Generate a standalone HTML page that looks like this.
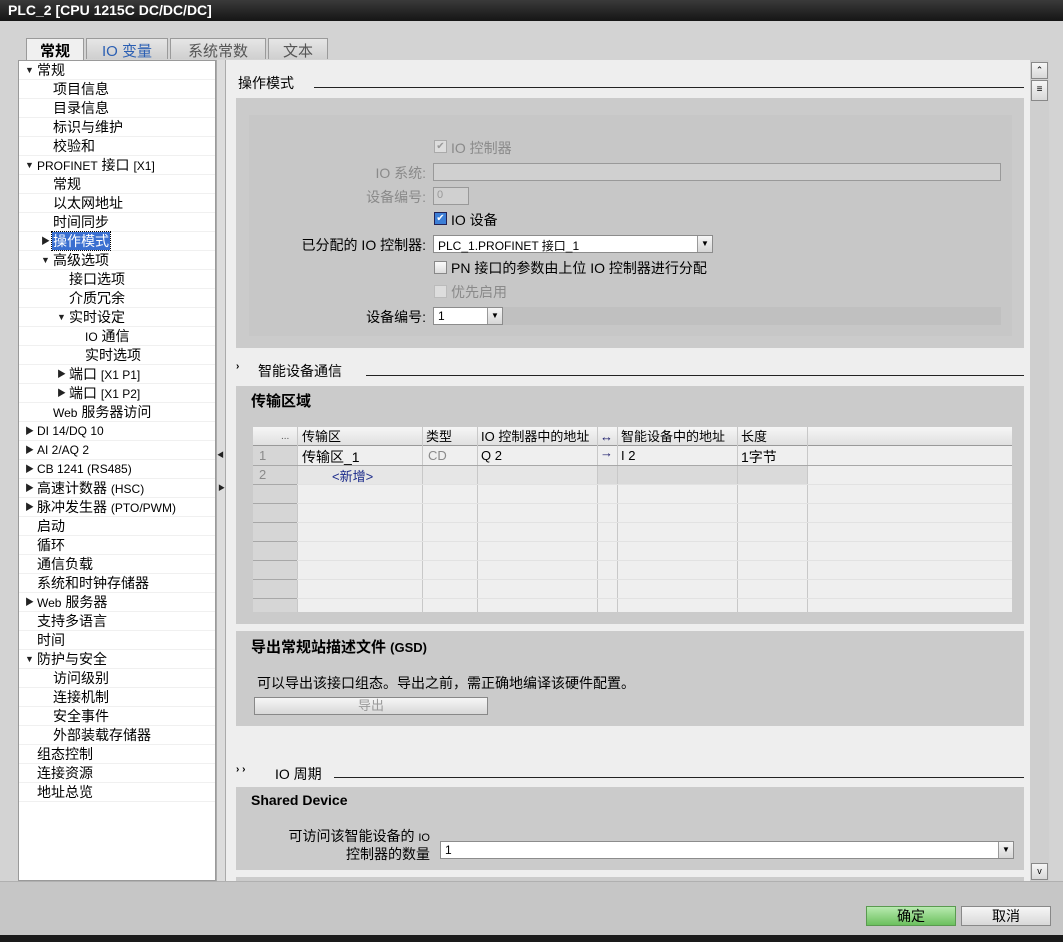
<!DOCTYPE html>
<html><head><meta charset="utf-8"><style>
*{margin:0;padding:0;box-sizing:border-box}
body{width:1063px;height:942px;overflow:hidden;background:#d3d3d3;font-family:"Liberation Sans","Noto Sans CJK SC",sans-serif;font-size:14px;color:#000;position:relative}
.a{position:absolute;white-space:nowrap}
.title{left:0;top:0;width:1063px;height:21px;background:linear-gradient(#3a3a3a,#151515);color:#fff;font-weight:bold;font-size:14px;padding:2px 0 0 8px}
.tab{top:38px;height:21px;border:1px solid #9a9a9a;border-bottom:none;background:linear-gradient(#e6e6e6,#cfcfcf);font-size:15px;text-align:center;padding-top:1px;color:#555}
.tree{left:18px;top:60px;width:198px;height:821px;background:#fff;border:1px solid #9a9a9a}
.tr{position:absolute;left:0;width:196px;height:19px;border-bottom:1px solid #f0f0f0;font-size:14px;line-height:18px}
.tr span{position:absolute}
.arr{font-size:9px;color:#222}
.sm{font-size:12px}
.content{left:226px;top:60px;width:804px;height:821px;background:#eeeeee}
.panel{background:#cbcbcb}
.hline{height:1px;background:#222}
.lbl{font-size:14px;text-align:right}
.gray{color:#8a8a8a}
.box{border:1px solid #8c8c8c;background:#fff;height:18px;font-size:12px;padding:1px 4px}
.dd{position:absolute;right:0;top:0;width:15px;height:16px;border-left:1px solid #999;background:linear-gradient(#f6f6f6,#d6d6d6);font-size:8px;text-align:center;line-height:16px}
.cb{width:13px;height:13px;border:1px solid #888;background:linear-gradient(#fafafa,#ddd)}
.btn{border:1px solid #888;background:linear-gradient(#f6f6f6,#d8d8d8);text-align:center;font-size:14px}
.th{font-size:13px;top:428px;line-height:18px}
</style></head><body>
<div class="a title">PLC_2 [CPU 1215C DC/DC/DC]</div>

<div class="a tab" style="left:26px;width:58px;background:#f0f0f0;color:#000;font-weight:bold;height:22px">常规</div>
<div class="a tab" style="left:86px;width:82px;color:#2b5fb3">IO 变量</div>
<div class="a tab" style="left:170px;width:96px">系统常数</div>
<div class="a tab" style="left:268px;width:60px">文本</div>

<div class="a tree">
<div class="tr" style="top:0"><span class="arr" style="left:6px">▼</span><span style="left:18px">常规</span></div>
<div class="tr" style="top:19px"><span style="left:34px">项目信息</span></div>
<div class="tr" style="top:38px"><span style="left:34px">目录信息</span></div>
<div class="tr" style="top:57px"><span style="left:34px">标识与维护</span></div>
<div class="tr" style="top:76px"><span style="left:34px">校验和</span></div>
<div class="tr" style="top:95px"><span class="arr" style="left:6px">▼</span><span style="left:18px"><span class="sm" style="position:static">PROFINET</span> 接口 <span class="sm" style="position:static">[X1]</span></span></div>
<div class="tr" style="top:114px"><span style="left:34px">常规</span></div>
<div class="tr" style="top:133px"><span style="left:34px">以太网地址</span></div>
<div class="tr" style="top:152px"><span style="left:34px">时间同步</span></div>
<div class="tr" style="top:171px"><span class="arr" style="left:22px">▶</span><span style="left:33px;background:#3a6fd0;color:#fff;padding:0 1px;outline:1px dotted #000">操作模式</span></div>
<div class="tr" style="top:190px"><span class="arr" style="left:22px">▼</span><span style="left:34px">高级选项</span></div>
<div class="tr" style="top:209px"><span style="left:50px">接口选项</span></div>
<div class="tr" style="top:228px"><span style="left:50px">介质冗余</span></div>
<div class="tr" style="top:247px"><span class="arr" style="left:38px">▼</span><span style="left:50px">实时设定</span></div>
<div class="tr" style="top:266px"><span style="left:66px"><span class="sm" style="position:static">IO</span> 通信</span></div>
<div class="tr" style="top:285px"><span style="left:66px">实时选项</span></div>
<div class="tr" style="top:304px"><span class="arr" style="left:38px">▶</span><span style="left:50px">端口 <span class="sm" style="position:static">[X1 P1]</span></span></div>
<div class="tr" style="top:323px"><span class="arr" style="left:38px">▶</span><span style="left:50px">端口 <span class="sm" style="position:static">[X1 P2]</span></span></div>
<div class="tr" style="top:342px"><span style="left:34px"><span class="sm" style="position:static">Web</span> 服务器访问</span></div>
<div class="tr sm" style="top:361px"><span class="arr" style="left:6px">▶</span><span style="left:18px">DI 14/DQ 10</span></div>
<div class="tr sm" style="top:380px"><span class="arr" style="left:6px">▶</span><span style="left:18px">AI 2/AQ 2</span></div>
<div class="tr sm" style="top:399px"><span class="arr" style="left:6px">▶</span><span style="left:18px">CB 1241 (RS485)</span></div>
<div class="tr" style="top:418px"><span class="arr" style="left:6px">▶</span><span style="left:18px">高速计数器 <span class="sm" style="position:static">(HSC)</span></span></div>
<div class="tr" style="top:437px"><span class="arr" style="left:6px">▶</span><span style="left:18px">脉冲发生器 <span class="sm" style="position:static">(PTO/PWM)</span></span></div>
<div class="tr" style="top:456px"><span style="left:18px">启动</span></div>
<div class="tr" style="top:475px"><span style="left:18px">循环</span></div>
<div class="tr" style="top:494px"><span style="left:18px">通信负载</span></div>
<div class="tr" style="top:513px"><span style="left:18px">系统和时钟存储器</span></div>
<div class="tr" style="top:532px"><span class="arr" style="left:6px">▶</span><span style="left:18px"><span class="sm" style="position:static">Web</span> 服务器</span></div>
<div class="tr" style="top:551px"><span style="left:18px">支持多语言</span></div>
<div class="tr" style="top:570px"><span style="left:18px">时间</span></div>
<div class="tr" style="top:589px"><span class="arr" style="left:6px">▼</span><span style="left:18px">防护与安全</span></div>
<div class="tr" style="top:608px"><span style="left:34px">访问级别</span></div>
<div class="tr" style="top:627px"><span style="left:34px">连接机制</span></div>
<div class="tr" style="top:646px"><span style="left:34px">安全事件</span></div>
<div class="tr" style="top:665px"><span style="left:34px">外部装载存储器</span></div>
<div class="tr" style="top:684px"><span style="left:18px">组态控制</span></div>
<div class="tr" style="top:703px"><span style="left:18px">连接资源</span></div>
<div class="tr" style="top:722px"><span style="left:18px">地址总览</span></div>
</div>
<div class="a" style="left:216px;top:60px;width:10px;height:821px;background:#dcdcdc;border-left:1px solid #aaa;border-right:1px solid #aaa"></div>
<div class="a arr" style="left:217px;top:450px;font-size:7px">◀</div>
<div class="a arr" style="left:218px;top:483px;font-size:7px">▶</div>

<div class="a content"></div>
<div class="a" style="left:238px;top:73px;font-size:14px">操作模式</div>
<div class="a hline" style="left:314px;top:87px;width:710px"></div>
<div class="a panel" style="left:236px;top:98px;width:788px;height:250px"></div>
<div class="a" style="left:249px;top:115px;width:763px;height:221px;background:#c7c7c7"></div>
<div class="a cb" style="left:434px;top:140px;background:#ddd;border-color:#aaa;color:#999;font-size:10px;line-height:11px;text-align:center">✔</div><div class="a gray" style="left:451px;top:138px">IO 控制器</div>
<div class="a lbl gray" style="left:300px;width:126px;top:163px">IO 系统:</div>
<div class="a" style="left:433px;top:163px;width:568px;height:18px;border:1px solid #999;background:#d0d0d0"></div>
<div class="a lbl gray" style="left:300px;width:126px;top:187px">设备编号:</div>
<div class="a" style="left:433px;top:187px;width:36px;height:18px;border:1px solid #999;background:#d0d0d0;font-size:11px;color:#999;padding:1px 3px">0</div>
<div class="a cb" style="left:434px;top:212px;background:#3c7ed6;border-color:#225;color:#fff;font-size:10px;line-height:11px;text-align:center">✔</div><div class="a" style="left:451px;top:210px">IO 设备</div>
<div class="a lbl" style="left:250px;width:176px;top:235px">已分配的 IO 控制器:</div>
<div class="a box" style="left:433px;top:235px;width:280px">PLC_1.PROFINET 接口_1<div class="dd">▼</div></div>
<div class="a cb" style="left:434px;top:261px"></div><div class="a" style="left:451px;top:258px">PN 接口的参数由上位 IO 控制器进行分配</div>
<div class="a cb" style="left:434px;top:285px;background:#ddd;border-color:#bbb"></div><div class="a gray" style="left:451px;top:282px">优先启用</div>
<div class="a" style="left:433px;top:307px;width:568px;height:18px;background:#c0c0c0"></div>
<div class="a lbl" style="left:300px;width:126px;top:307px">设备编号:</div>
<div class="a box" style="left:433px;top:307px;width:70px">1<div class="dd">▼</div></div>

<div class="a" style="left:236px;top:361px;font-size:10px;font-weight:bold">›</div>
<div class="a" style="left:258px;top:361px">智能设备通信</div>
<div class="a hline" style="left:366px;top:375px;width:658px"></div>
<div class="a panel" style="left:236px;top:386px;width:788px;height:238px"></div>
<div class="a" style="left:251px;top:390px;font-weight:bold;font-size:15px">传输区域</div>
<div class="a" style="left:253px;top:427px;width:759px;height:185px;background:#efefef;border-top:1px solid #999"></div>
<div class="a" style="left:253px;top:427px;width:44px;height:185px;background:#d6d6d6"></div>
<div class="a" style="left:253px;top:427px;width:759px;height:19px;background:linear-gradient(#f6f6f6,#e0e0e0);border-bottom:1px solid #999"></div>
<div class="a" style="left:298px;top:466px;width:300px;height:18px;background:#e6e6e6"></div>
<div class="a" style="left:598px;top:466px;width:209px;height:18px;background:#dadada"></div>
<svg class="a" style="left:253px;top:427px" width="759" height="185">
<g stroke="#c8c8c8"><line x1="44.5" y1="0" x2="44.5" y2="185"/><line x1="169.5" y1="0" x2="169.5" y2="185"/><line x1="224.5" y1="0" x2="224.5" y2="185"/><line x1="344.5" y1="0" x2="344.5" y2="185"/><line x1="364.5" y1="0" x2="364.5" y2="185"/><line x1="484.5" y1="0" x2="484.5" y2="185"/><line x1="554.5" y1="0" x2="554.5" y2="185"/></g>
<g stroke="#a8a8a8"><line x1="0" y1="38.5" x2="759" y2="38.5"/><line x1="0" y1="57.5" x2="44" y2="57.5"/><line x1="0" y1="76.5" x2="44" y2="76.5"/><line x1="0" y1="95.5" x2="44" y2="95.5"/><line x1="0" y1="114.5" x2="44" y2="114.5"/><line x1="0" y1="133.5" x2="44" y2="133.5"/><line x1="0" y1="152.5" x2="44" y2="152.5"/><line x1="0" y1="171.5" x2="44" y2="171.5"/></g>
<g stroke="#e2e2e2"><line x1="44" y1="57.5" x2="759" y2="57.5"/><line x1="44" y1="76.5" x2="759" y2="76.5"/><line x1="44" y1="95.5" x2="759" y2="95.5"/><line x1="44" y1="114.5" x2="759" y2="114.5"/><line x1="44" y1="133.5" x2="759" y2="133.5"/><line x1="44" y1="152.5" x2="759" y2="152.5"/><line x1="44" y1="171.5" x2="759" y2="171.5"/></g>
</svg>
<div class="a th" style="left:281px;font-size:10px;color:#555">...</div>
<div class="a th" style="left:302px">传输区</div>
<div class="a th" style="left:426px">类型</div>
<div class="a th" style="left:481px">IO 控制器中的地址</div>
<div class="a th" style="left:600px;color:#1a1a6a;font-weight:bold">↔</div>
<div class="a th" style="left:621px">智能设备中的地址</div>
<div class="a th" style="left:741px">长度</div>
<div class="a gray" style="left:259px;top:448px;font-size:13px">1</div>
<div class="a" style="left:302px;top:447px">传输区_1</div>
<div class="a gray" style="left:428px;top:448px;font-size:13px">CD</div>
<div class="a" style="left:481px;top:448px;font-size:13px">Q 2</div>
<div class="a" style="left:600px;top:445px;font-size:13px;color:#1a1a6a;font-weight:bold">→</div>
<div class="a" style="left:621px;top:448px;font-size:13px">I 2</div>
<div class="a" style="left:741px;top:447px">1字节</div>
<div class="a gray" style="left:259px;top:467px;font-size:13px">2</div>
<div class="a" style="left:332px;top:466px;color:#1a2a8a;font-size:13px">&lt;新增&gt;</div>

<div class="a panel" style="left:236px;top:631px;width:788px;height:95px"></div>
<div class="a" style="left:251px;top:636px;font-weight:bold;font-size:15px">导出常规站描述文件 <span style="font-size:13px">(GSD)</span></div>
<div class="a" style="left:257px;top:673px">可以导出该接口组态。导出之前，需正确地编译该硬件配置。</div>
<div class="a btn" style="left:254px;top:697px;width:234px;height:18px;color:#999;font-size:13px;line-height:16px">导出</div>

<div class="a" style="left:236px;top:764px;font-size:10px;font-weight:bold">› ›</div>
<div class="a" style="left:275px;top:764px">IO 周期</div>
<div class="a hline" style="left:334px;top:777px;width:690px"></div>
<div class="a panel" style="left:236px;top:787px;width:788px;height:83px"></div>
<div class="a" style="left:251px;top:792px;font-weight:bold;font-size:14px">Shared Device</div>
<div class="a lbl" style="left:260px;width:170px;top:828px;line-height:16px">可访问该智能设备的 <span style="font-size:11px">IO</span><br>控制器的数量</div>
<div class="a box" style="left:440px;top:841px;width:574px">1<div class="dd">▼</div></div>
<div class="a panel" style="left:236px;top:877px;width:788px;height:4px"></div>

<div class="a" style="left:1030px;top:60px;width:19px;height:821px;background:#cfcfcf"></div>
<div class="a btn" style="left:1031px;top:62px;width:17px;height:17px;font-size:9px;line-height:15px">⌃</div>
<div class="a btn" style="left:1031px;top:80px;width:17px;height:21px;font-size:10px;line-height:18px">≡</div>
<div class="a btn" style="left:1031px;top:863px;width:17px;height:17px;font-size:9px;line-height:15px">v</div>

<div class="a" style="left:0;top:881px;width:1063px;height:54px;background:#c6c6c6;border-top:1px solid #b0b0b0"></div>
<div class="a btn" style="left:866px;top:906px;width:90px;height:20px;background:linear-gradient(#b8eab0,#6cc05e);border-color:#5a9a50;line-height:18px">确定</div>
<div class="a btn" style="left:961px;top:906px;width:90px;height:20px;line-height:18px">取消</div>
<div class="a" style="left:0;top:935px;width:1063px;height:7px;background:#1a1a1a"></div>
</body></html>
